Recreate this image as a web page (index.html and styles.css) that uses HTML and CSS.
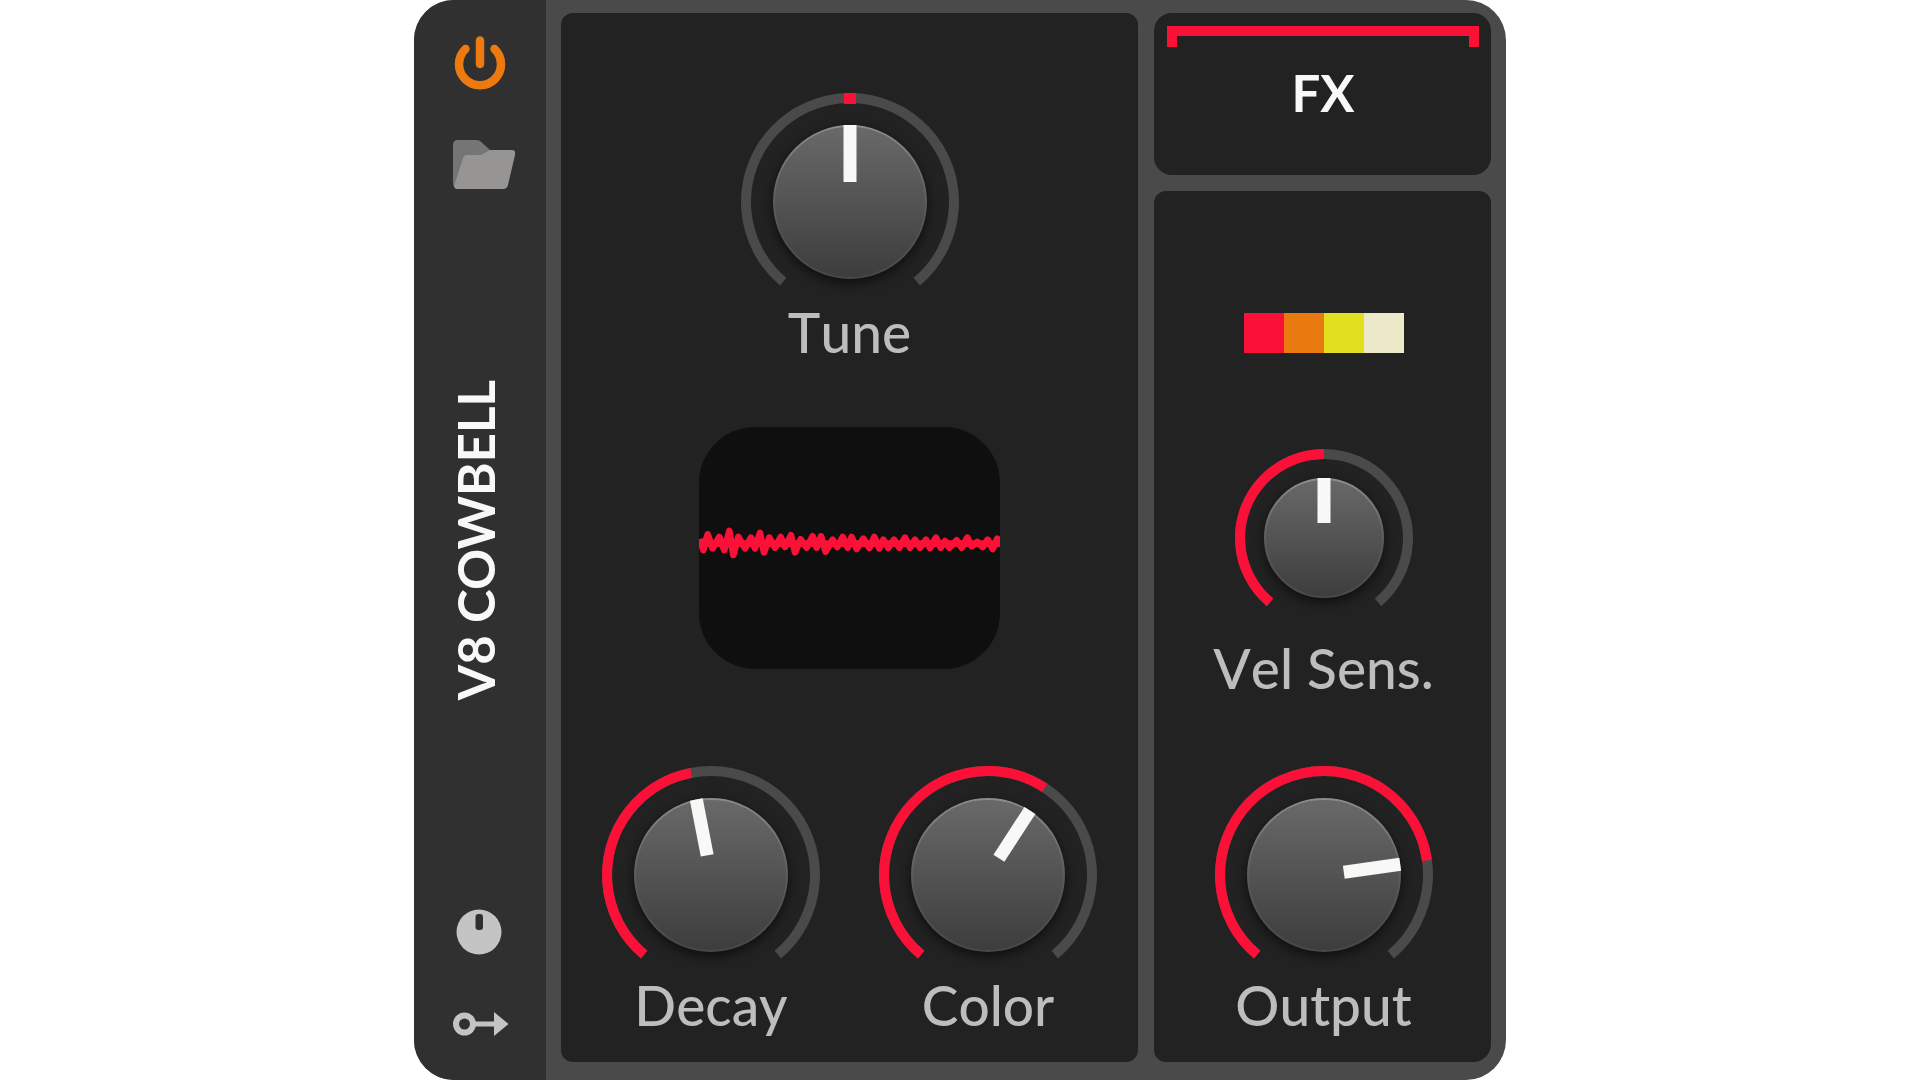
FILE: index.html
```html
<!DOCTYPE html>
<html lang="en">
<head>
  <meta charset="UTF-8" />
  <meta name="viewport" content="width=device-width, initial-scale=1.0"/>
  <title>V8 Cowbell</title>
  <link rel="stylesheet" href="styles.css">
</head>
<body>

  <!-- shared knob gradients -->
  <svg class="defs" width="0" height="0" aria-hidden="true">
    <defs>
      <linearGradient id="capFill" x1="0" y1="0" x2="0" y2="1">
        <stop offset="0" stop-color="#696969"/>
        <stop offset="1" stop-color="#3d3d3d"/>
      </linearGradient>
      <linearGradient id="capEdge" x1="0" y1="0" x2="0" y2="1">
        <stop offset="0" stop-color="#8c8c88"/>
        <stop offset="0.5" stop-color="#5c5c5c"/>
        <stop offset="1" stop-color="#484848"/>
      </linearGradient>
    </defs>
  </svg>

  <main class="device">
    <aside class="sidebar">
      <div class="tools">
        <button class="icon-btn" aria-label="Power">
          <svg viewBox="-32 -32 64 64" fill="none" stroke="#ec7a10" stroke-width="8.500" stroke-linecap="round">
            <path d="M-14.5 -15A21 21 0 1 0 14.5 -15"/>
            <path d="M0 -23.5V0"/>
          </svg>
        </button>
        <button class="icon-btn" aria-label="Open preset">
          <svg viewBox="0 0 64 64">
            <path d="M5 13Q5 8 10 8H28Q30 8 32 9L42 18V30L12 56H9Q5 56 5 51Z" fill="#757575"/>
            <path d="M19 23H33L42 18H64Q68 18 67 23L60 53Q59 57 55 57H9Q5 57 7 51L15 26Q16 23 19 23Z" fill="#969593"/>
          </svg>
        </button>
      </div>

      <h1 class="title">V8 COWBELL</h1>

      <div class="tools tools-bottom">
        <button class="icon-btn" aria-label="Remote controls">
          <svg viewBox="-32 -32 64 64">
            <circle cx="-1" r="22.5" fill="#c4c4c4"/>
            <rect x="-4.500" y="-18" width="7.500" height="16" rx="3" fill="#303030"/>
          </svg>
        </button>
        <button class="icon-btn" aria-label="Modulators">
          <svg viewBox="-32 -32 64 64">
            <circle cx="-15.5" r="8.500" fill="none" stroke="#c4c4c4" stroke-width="6"/>
            <path d="M-5 -2.500H14V-12L28.500 0L14 12V2.500H-5Z" fill="#c4c4c4"/>
          </svg>
        </button>
      </div>
    </aside>

    <section class="panel voice">
      <div class="knob">
        <div class="dial">
          <svg viewBox="-110 -110 220 196">
            <path class="track" d="M-66.8 79.7A104 104 0 1 1 66.8 79.7"/>
            <rect class="mark" x="-6" y="-109" width="12" height="11"/>
            <circle class="cap" r="76"/>
            <rect class="pointer" x="-6.500" y="-77" width="13" height="57"/>
          </svg>
          <input type="range" id="tune" min="-140" max="140" value="0">
        </div>
        <label for="tune">Tune</label>
      </div>

      <svg class="scope" viewBox="27 22 903 726" preserveAspectRatio="none" role="img" aria-label="Waveform">
        <path d="M27 372H930"/>
        <polyline points="30,358 40,391 53,344 68,386 88,352 103,391 118,334 130,406 145,352 165,386 183,354 195,386 210,340 222,398 238,354 255,384 272,352 285,382 303,347 315,398 332,359 350,384 368,350 380,384 393,350 407,396 428,360 442,382 458,352 473,384 485,352 500,388 520,357 538,385 553,352 568,386 580,360 595,385 612,360 628,384 645,354 660,384 675,360 690,384 708,360 720,385 738,354 752,384 765,364 778,384 800,362 815,384 832,354 845,380 862,367 878,382 893,360 908,388 922,357 932,374"/>
      </svg>

      <div class="knob-row">
        <div class="knob">
          <div class="dial">
            <svg viewBox="-110 -110 220 196">
              <path class="track" d="M-66.8 79.7A104 104 0 1 1 66.8 79.7"/>
              <path class="value" pathLength="280" stroke-dasharray="129 400" d="M-66.8 79.7A104 104 0 1 1 66.8 79.7"/>
              <circle class="cap" r="76"/>
              <rect class="pointer" x="-6.500" y="-77" width="13" height="57" transform="rotate(-11)"/>
            </svg>
            <input type="range" id="decay" min="-140" max="140" value="-11">
          </div>
          <label for="decay">Decay</label>
        </div>
        <div class="knob">
          <div class="dial">
            <svg viewBox="-110 -110 220 196">
              <path class="track" d="M-66.8 79.7A104 104 0 1 1 66.8 79.7"/>
              <path class="value" pathLength="280" stroke-dasharray="173 400" d="M-66.8 79.7A104 104 0 1 1 66.8 79.7"/>
              <circle class="cap" r="76"/>
              <rect class="pointer" x="-6.500" y="-77" width="13" height="57" transform="rotate(33)"/>
            </svg>
            <input type="range" id="color" min="-140" max="140" value="33">
          </div>
          <label for="color">Color</label>
        </div>
      </div>
    </section>

    <div class="side">
      <button class="panel fx">
        <span class="bracket"></span>
        FX
      </button>

      <section class="panel amp">
        <div class="swatches">
          <span class="red"></span>
          <span class="orange"></span>
          <span class="yellow"></span>
          <span class="cream"></span>
        </div>

        <div class="knob small">
          <div class="dial">
            <svg viewBox="-90 -90 180 176">
              <path class="track" d="M-54 64.3A84 84 0 1 1 54 64.3"/>
              <path class="value" pathLength="280" stroke-dasharray="140 400" d="M-54 64.3A84 84 0 1 1 54 64.3"/>
              <circle class="cap" r="59"/>
              <rect class="pointer" x="-6.500" y="-60" width="13" height="45"/>
            </svg>
            <input type="range" id="vel" min="-140" max="140" value="0">
          </div>
          <label for="vel">Vel Sens.</label>
        </div>

        <div class="knob output">
          <div class="dial">
            <svg viewBox="-110 -110 220 196">
              <path class="track" d="M-66.8 79.7A104 104 0 1 1 66.8 79.7"/>
              <path class="value" pathLength="280" stroke-dasharray="222 400" d="M-66.8 79.7A104 104 0 1 1 66.8 79.7"/>
              <circle class="cap" r="76"/>
              <rect class="pointer" x="-6.500" y="-77" width="13" height="57" transform="rotate(82)"/>
            </svg>
            <input type="range" id="output" min="-140" max="140" value="82">
          </div>
          <label for="output">Output</label>
        </div>
      </section>
    </div>
  </main>

</body>
</html>
```
FILE: styles.css
```css
:root {
  --frame: #4a4a4a;
  --sidebar: #303030;
  --panel: #222222;
  --red: #fb1037;
  --label: #bdbdbd;
}
* {
  box-sizing: border-box;
}
body {
  margin: 0;
  font-family: Lato, sans-serif;
  font-kerning: none;
  background: #fff;
  color: #f8f8f6;
}
.defs {
  position: absolute;
}
button {
  border: none;
  padding: 0;
  font-family: inherit;
  color: inherit;
  cursor: pointer;
}
.device {
  display: grid;
  grid-template-columns: 132px 592fr 368fr;
  max-width: 1092px;
  min-height: 100vh;
  margin: 0 auto;
  background: var(--frame);
  border-radius: 40px;
  overflow: hidden;
}
.sidebar {
  display: grid;
  grid-template-rows: 1fr auto 1fr;
  justify-items: center;
  padding: 32px 0 24px;
  background: var(--sidebar);
}
.tools {
  display: flex;
  flex-direction: column;
  gap: 36px;
}
.tools-bottom {
  align-self: end;
  gap: 28px;
}
.icon-btn {
  width: 64px;
  height: 64px;
  background: none;
}
.icon-btn svg {
  display: block;
  width: 100%;
  overflow: visible;
}
.title {
  margin: 0 8px 8px 0;
  font-size: 51px;
  line-height: 64px;
  font-weight: bold;
  font-kerning: normal;
  writing-mode: vertical-rl;
  transform: rotate(180deg);
}
.panel {
  background: var(--panel);
  border-radius: 12px;
}
.voice {
  display: flex;
  flex-direction: column;
  align-items: center;
  margin: 13px 0 18px 15px;
  padding: 79px 0 25px;
}
.side {
  display: flex;
  flex-direction: column;
  gap: 16px;
  margin: 13px 15px 18px 16px;
}
.fx {
  height: 162px;
  padding: 13px 12px 0 13px;
  border-radius: 18px;
  display: flex;
  flex-direction: column;
  align-items: center;
  gap: 14px;
  font-size: 51px;
  line-height: 64px;
  font-weight: bold;
}
.bracket {
  align-self: stretch;
  height: 21px;
  border: 10px solid var(--red);
  border-bottom: none;
}
.amp {
  flex: 1;
  display: flex;
  flex-direction: column;
  align-items: center;
  padding: 122px 0 25px 2px;
  border-bottom-right-radius: 18px;
}
.swatches {
  display: flex;
  margin-bottom: 95px;
}
.swatches span {
  width: 40px;
  height: 40px;
}
.red { background: var(--red); }
.orange { background: #ea7a10; }
.yellow { background: #e2de20; }
.cream { background: #ebe9c8; }
.knob {
  display: flex;
  flex-direction: column;
  align-items: center;
  gap: 12px;
  width: 220px;
}
.knob label {
  font-size: 55px;
  line-height: 64px;
  font-weight: 500;
  color: var(--label);
  white-space: nowrap;
}
.dial {
  position: relative;
  width: 220px;
}
.small .dial {
  width: 180px;
}
.dial svg {
  display: block;
  width: 100%;
  overflow: visible;
}
/* invisible slider on top of the drawn dial */
.dial input {
  position: absolute;
  inset: 0;
  width: 100%;
  height: 100%;
  margin: 0;
  opacity: 0;
  cursor: pointer;
}
.track, .value {
  fill: none;
  stroke: var(--frame);
  stroke-width: 10;
}
.value {
  stroke: var(--red);
}
.mark {
  fill: var(--red);
}
.cap {
  fill: url(#capFill);
  stroke: url(#capEdge);
  stroke-width: 2;
  filter: drop-shadow(0 4px 6px rgba(0,0,0,0.6));
}
.pointer {
  fill: #f8f8f6;
}
.scope {
  width: 301px;
  height: 242px;
  margin: 63px 0;
  background: #0f0f0f;
  border-radius: 56px;
}
.scope path, .scope polyline {
  fill: none;
  stroke: var(--red);
  stroke-width: 20;
  stroke-linejoin: round;
}
.knob-row {
  display: flex;
  gap: 57px;
  margin-top: auto;
}
.output {
  margin-top: auto;
}
```
